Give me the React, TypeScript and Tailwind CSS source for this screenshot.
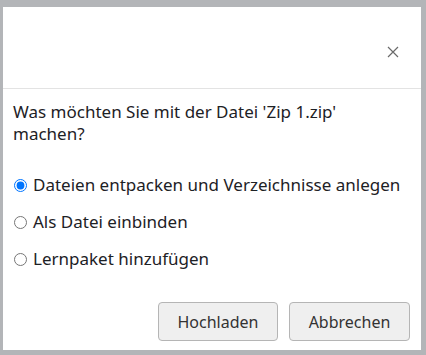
import { useState } from 'react';

const options = [
  { id: 'unzip', label: 'Dateien entpacken und Verzeichnisse anlegen' },
  { id: 'file', label: 'Als Datei einbinden' },
  { id: 'package', label: 'Lernpaket hinzufügen' },
];

export default function App() {
  const [choice, setChoice] = useState('unzip');

  return (
    <div className="w-[426px] h-[355px] bg-[#b3b5b8] pt-[7px] pl-[3px] pr-[5px] pb-[5px] overflow-hidden font-['Noto_Sans',sans-serif]">
      <div className="w-full h-full bg-white flex flex-col">
        <div className="h-[82px] flex items-start justify-end border-b border-[#e3e3e3] shrink-0">
          <button type="button" className="mt-[38px] mr-[21px] w-[14px] h-[14px] flex items-center justify-center text-[#6a6a6a]">
            <svg width="12" height="12" viewBox="0 0 12 12" fill="none" stroke="currentColor" strokeWidth="1.2">
              <path d="M1 1 L11 11 M11 1 L1 11" />
            </svg>
          </button>
        </div>

        <div className="px-[10px] pt-[12px] flex-1 flex flex-col">
          <p className="text-[17px] leading-[22px] text-[#1d2125]">
            Was möchten Sie mit der Datei 'Zip 1.zip' machen?
          </p>

          <div className="mt-[29px] flex flex-col gap-[15px]">
            {options.map((opt) => (
              <label key={opt.id} className="flex items-center h-[22px] text-[17px] text-[#1d2125]">
                <input
                  type="radio"
                  name="zip-action"
                  checked={choice === opt.id}
                  onChange={() => setChoice(opt.id)}
                  className="w-[13px] h-[13px] m-0 ml-[1px] mr-[6px] accent-[#0075ff]"
                />
                {opt.label}
              </label>
            ))}
          </div>

          <div className="mt-auto mb-[9px] flex justify-end gap-[11px] pr-[1px]">
            <button type="button" className="w-[120px] h-[39px] rounded-[4px] border border-[#b5b5b5] bg-[#efefef] text-[16px] text-[#333]">
              Hochladen
            </button>
            <button type="button" className="w-[121px] h-[39px] rounded-[4px] border border-[#b5b5b5] bg-[#efefef] text-[16px] text-[#333]">
              Abbrechen
            </button>
          </div>
        </div>
      </div>
    </div>
  );
}
